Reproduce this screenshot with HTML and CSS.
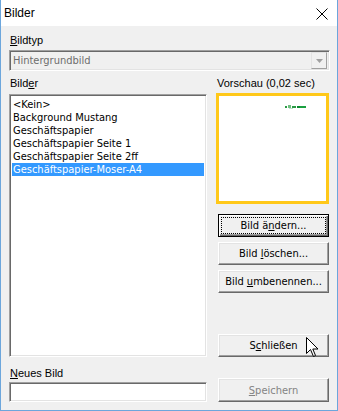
FILE: index.html
```html
<!DOCTYPE html>
<html>
<head>
<meta charset="utf-8">
<link rel="stylesheet" href="styles.css">
</head>
<body>
<div class="window">
  <div class="titlebar">
    <span class="title">Bilder</span>
    <svg class="close" width="12" height="12" viewBox="0 0 12 12"><path d="M0.5 0.5 L11.5 11.5 M11.5 0.5 L0.5 11.5" stroke="#000" stroke-width="1"/></svg>
  </div>
  <div class="body">
    <div class="lbl lbl-type"><u>B</u>ildtyp</div>
    <div class="combo">
      <span class="combo-text">Hintergrundbild</span>
      <span class="combo-btn"><svg width="7" height="4" viewBox="0 0 7 4"><path d="M0 0 H7 L3.5 4 Z" fill="#a0a0a0"/></svg></span>
    </div>
    <div class="main">
      <div class="col-left">
        <div class="lbl">Bild<u>e</u>r</div>
        <ul class="list">
          <li>&lt;Kein&gt;</li>
          <li>Background Mustang</li>
          <li>Geschäftspapier</li>
          <li>Geschäftspapier Seite 1</li>
          <li>Geschäftspapier Seite 2ff</li>
          <li class="sel">Geschäftspapier-Moser-A4</li>
        </ul>
        <div class="lbl lbl-new"><u>N</u>eues Bild</div>
        <div class="input"></div>
      </div>
      <div class="col-right">
        <div class="lbl">Vorschau (0,02 sec)</div>
        <div class="preview">
          <svg class="thumb" width="22" height="5" viewBox="0 0 22 5">
            <rect x="0" y="1" width="2" height="2" fill="#2a9a45"/>
            <rect x="3" y="0" width="3" height="3" fill="#6fbf80"/>
            <rect x="7" y="1" width="4" height="2" fill="#2a9a45"/>
            <rect x="12" y="1" width="3" height="2" fill="#0d8a30"/>
            <rect x="15" y="1" width="6" height="2" fill="#1aa040"/>
            <rect x="4" y="3" width="4" height="1" fill="#bfe2c8"/>
          </svg>
        </div>
        <button class="btn btn-focus"><span class="focus-ring"><span>Bild ä<u>n</u>dern...</span></span></button>
        <button class="btn"><span>Bild <u>l</u>öschen...</span></button>
        <button class="btn"><span>Bild <u>u</u>mbenennen...</span></button>
        <button class="btn btn-close"><span>S<u>c</u>hließen</span></button>
        <button class="btn btn-save" disabled><span><u>S</u>peichern</span></button>
        <svg class="cursor" width="13" height="20" viewBox="0 0 13 20"><path d="M0.5 0.5 L0.5 16.5 L4.5 12.5 L7.5 19.5 L9.5 18.5 L6.8 12 L12 12 Z" fill="#fff" stroke="#000" stroke-width="1" stroke-linejoin="miter"/></svg>
      </div>
    </div>
  </div>
</div>
</body>
</html>
```
FILE: styles.css
```css
* { box-sizing: border-box; }
html, body { margin: 0; padding: 0; }
body { width: 338px; height: 411px; overflow: hidden; background: #fff; }

.window {
  width: 338px;
  height: 411px;
  border: 1px solid #6ca6dc;
  border-top: none;
  background: #f0f0f0;
  display: flex;
  flex-direction: column;
  font-family: "Liberation Sans", Arial, sans-serif;
}

.titlebar {
  height: 26px;
  background: #fff;
  display: flex;
  align-items: center;
  justify-content: space-between;
  padding: 0 9px 0 3px;
}
.title { font-size: 12px; color: #000; line-height: 14px; }
.close { display: block; margin-top: 1px; }

.body { padding: 0 7px 0 8px; flex: 1; display: flex; flex-direction: column; }

.lbl {
  font-size: 11px;
  line-height: 15px;
  height: 15px;
  color: #000;
  padding-left: 1px;
}
.lbl-type { margin-top: 7px; }

.combo {
  margin-top: 2px;
  height: 21px;
  border: 1px solid;
  border-color: #a0a0a0 #fff #fff #a0a0a0;
  box-shadow: inset 1px 1px #696969, inset -1px -1px #e3e3e3;
  display: flex;
  align-items: center;
  justify-content: space-between;
  padding: 0 2px 0 3px;
  font-family: "DejaVu Sans Condensed", "DejaVu Sans", sans-serif;
  font-size: 11px;
  color: #6d6d6d;
}
.combo-btn {
  width: 16px;
  height: 17px;
  border: 1px solid;
  border-color: #e3e3e3 #a0a0a0 #a0a0a0 #e3e3e3;
  display: flex;
  align-items: center;
  justify-content: center;
  background: #f0f0f0;
}
.combo-btn svg { display: block; }

.main { display: flex; gap: 9px; margin-top: 5px; }
.col-left { width: 198px; display: flex; flex-direction: column; }
.col-right { width: 113px; display: flex; flex-direction: column; position: relative; }

.list {
  list-style: none;
  margin: 3px 0 0 0;
  padding: 3px 2px;
  height: 263px;
  background: #fff;
  border: 1px solid;
  border-color: #a0a0a0 #fff #fff #a0a0a0;
  box-shadow: inset 1px 1px #696969, inset -1px -1px #e3e3e3;
  font-family: "DejaVu Sans Condensed", "DejaVu Sans", sans-serif;
  font-size: 11px;
  line-height: 13px;
  color: #000;
}
.list li { padding-left: 1px; height: 13px; white-space: nowrap; }
.list li.sel { background: #3399ff; color: #fff; }

.lbl-new { margin-top: 9px; }
.input {
  margin-top: 1px;
  height: 20px;
  background: #fff;
  border: 1px solid;
  border-color: #a0a0a0 #fff #fff #a0a0a0;
  box-shadow: inset 1px 1px #696969, inset -1px -1px #e3e3e3;
}

.preview {
  margin-top: 2px;
  height: 111px;
  border: 3px solid #ffc819;
  background: #fff;
  position: relative;
}
.thumb { position: absolute; left: 66px; top: 9px; }

.btn {
  margin: 0 0 0 2px;
  width: 111px;
  height: 23px;
  background: #f0f0f0;
  border: 1px solid;
  border-color: #fff #696969 #696969 #fff;
  box-shadow: inset -1px -1px #a0a0a0, inset 1px 1px #e3e3e3;
  font-family: "DejaVu Sans Condensed", "DejaVu Sans", sans-serif;
  font-size: 11px;
  color: #000;
  padding: 0;
  display: flex;
  align-items: center;
  justify-content: center;
  white-space: pre;
}
.btn + .btn { margin-top: 5px; }
.btn-focus {
  margin-top: 10px;
  border: 1px solid #000;
  box-shadow: inset 1px 1px #fff, inset -1px -1px #696969, inset -2px -2px #a0a0a0;
}
.focus-ring {
  display: flex;
  align-items: center;
  justify-content: center;
  width: 103px;
  height: 15px;
  outline: 1px dotted #000;
}
.btn-close { margin-top: 41px !important; }
.btn-save { margin-top: 21px !important; height: 24px; color: #838383; }

.cursor { position: absolute; left: 90px; top: 261px; }
```
